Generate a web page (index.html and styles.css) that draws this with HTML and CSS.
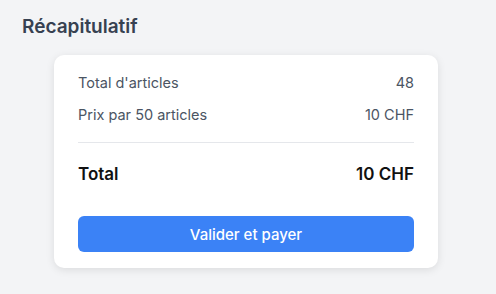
FILE: index.html
```html
<!DOCTYPE html>
<html lang="fr">
<head>
  <meta charset="UTF-8" />
  <meta name="viewport" content="width=device-width, initial-scale=1" />
  <title>Récapitulatif</title>
  <link rel="stylesheet" href="styles.css">
</head>
<body>
  <section class="summary">
    <h2>Récapitulatif</h2>

    <div class="card">
      <div class="row">
        <span>Total d'articles</span>
        <span>48</span>
      </div>
      <div class="row">
        <span>Prix par 50 articles</span>
        <span>10 CHF</span>
      </div>

      <div class="total">
        <span>Total</span>
        <span>10 CHF</span>
      </div>

      <button class="pay">Valider et payer</button>
    </div>
  </section>
</body>
</html>
```

FILE: styles.css
```css
* { box-sizing: border-box; }
html, body {
  margin: 0; padding: 0;
  font-family: Inter, 'Noto Sans', sans-serif;
  background: #f3f4f6;
  height: 100vh;
  overflow: hidden;
}

.summary {
  padding: 13px 22px;
}

.summary h2 {
  margin: 0 0 15px;
  font-size: 19px;
  font-weight: 600;
  color: #374151;
  line-height: 27px;
}

.card {
  margin-left: 32px;
  width: 384px;
  background: #fff;
  border-radius: 10px;
  box-shadow: 0 2px 8px rgba(0,0,0,0.1);
  padding: 18px 24px 16px;
  display: flex;
  flex-direction: column;
}

.row {
  display: flex;
  justify-content: space-between;
  font-size: 14.5px;
  line-height: 20px;
  color: #4b5563;
}

.row + .row {
  margin-top: 12px;
}

.total {
  margin-top: 17px;
  border-top: 1px solid #e5e7eb;
  padding-top: 19px;
  display: flex;
  justify-content: space-between;
  font-size: 17px;
  line-height: 24px;
  font-weight: 600;
  color: #111;
}

.pay {
  margin-top: 30px;
  height: 36px;
  border: none;
  border-radius: 6px;
  background: #3b82f6;
  color: #fff;
  font-family: inherit;
  font-size: 15px;
  font-weight: 500;
  cursor: pointer;
}
```
